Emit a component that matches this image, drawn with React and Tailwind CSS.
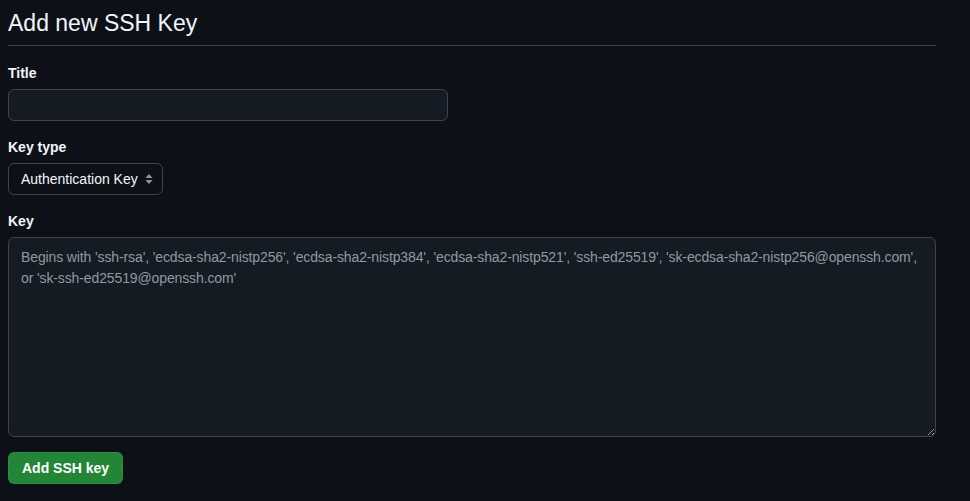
import React from 'react';

const FONT = { fontFamily: '"Liberation Sans", Arial, sans-serif' };

function SelectArrows() {
  return (
    <svg width="8" height="12" viewBox="0 0 8 12" className="text-[#9198a1]" fill="currentColor">
      <path d="M4 1 L7.5 5 H0.5 Z" />
      <path d="M4 11 L0.5 7 H7.5 Z" />
    </svg>
  );
}

export default function App() {
  return (
    <div className="min-h-[501px] bg-[#0d1117] text-[#f0f6fc] px-2" style={FONT}>
      <div className="w-[928px]">
        <h2 className="text-[23px] leading-[36px] pt-[5px] pb-[4px] border-b border-[#3d444d] font-normal">
          Add new SSH Key
        </h2>

        <div className="mt-[17px]">
          <label className="block text-[14px] font-bold leading-[20px] mb-[6px]">Title</label>
          <input
            type="text"
            className="block w-[440px] h-[32px] rounded-[6px] border border-[#3d444d] bg-[#151b23] px-3 text-[14px] outline-none"
          />
        </div>

        <div className="mt-[16px]">
          <label className="block text-[14px] font-bold leading-[20px] mb-[6px]">Key type</label>
          <div className="inline-flex items-center gap-[7px] h-[32px] rounded-[6px] border border-[#3d444d] bg-[#0d1117] pl-3 pr-[9px] text-[14px]">
            <span>Authentication Key</span>
            <SelectArrows />
          </div>
        </div>

        <div className="mt-[16px]">
          <label className="block text-[14px] font-bold leading-[20px] mb-[6px]">Key</label>
          <textarea
            className="block w-full h-[200px] rounded-[6px] border border-[#3d444d] bg-[#151b23] px-3 py-[9px] text-[14px] tracking-[-0.12px] leading-[21px] outline-none placeholder:text-[#9198a1] [color-scheme:dark]"
            placeholder="Begins with 'ssh-rsa', 'ecdsa-sha2-nistp256', 'ecdsa-sha2-nistp384', 'ecdsa-sha2-nistp521', 'ssh-ed25519', 'sk-ecdsa-sha2-nistp256@openssh.com', or 'sk-ssh-ed25519@openssh.com'"
          />
        </div>

        <button className="mt-[15px] h-[32px] px-[13px] rounded-[6px] bg-[#238636] border border-[#2ea043]/40 text-white text-[14px] font-bold">
          Add SSH key
        </button>
      </div>
    </div>
  );
}
